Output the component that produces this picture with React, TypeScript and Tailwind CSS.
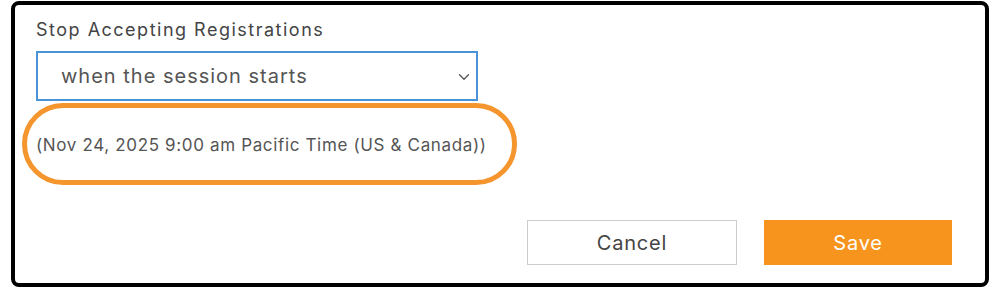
import { ChevronDown } from "lucide-react";

export default function App() {
  return (
    <div className="w-[1000px] h-[295px] bg-white pl-[11px] pt-[1px]" style={{ fontFamily: "Inter, 'Noto Sans', sans-serif" }}>
      <div className="relative w-[978px] h-[286px] border-[4px] border-black rounded-[8px] pl-[21px] pr-[33px] pt-[12px] flex flex-col">
        <label className="text-[18px] leading-[25px] tracking-[1.5px] text-[#444]">Stop Accepting Registrations</label>
        <div className="mt-[9px] w-[442px] h-[50px] border-2 border-[#4a93d6] flex items-center justify-between pl-[23px] pr-[3px]">
          <span className="text-[20px] tracking-[1px] text-[#555]">when the session starts</span>
          <ChevronDown className="w-[18px] h-[18px] mt-[2px] text-[#555]" strokeWidth={1.75} />
        </div>
        <p className="mt-[32px] text-[17px] leading-[24px] tracking-[0.65px] text-[#555]">
          (Nov 24, 2025 9:00 am Pacific Time (US &amp; Canada))
        </p>
        <div className="absolute left-[7px] top-[98px] w-[495px] h-[82px] rounded-full border-[5px] border-[#f5952e]" />
        <div className="mt-auto mb-[18px] flex justify-end gap-[27px]">
          <button className="w-[210px] h-[45px] border border-[#ccc] bg-white text-[20px] tracking-[0.8px] text-[#444]">Cancel</button>
          <button className="w-[188px] h-[45px] bg-[#f7941d] text-[20px] tracking-[0.75px] text-white">Save</button>
        </div>
      </div>
    </div>
  );
}
